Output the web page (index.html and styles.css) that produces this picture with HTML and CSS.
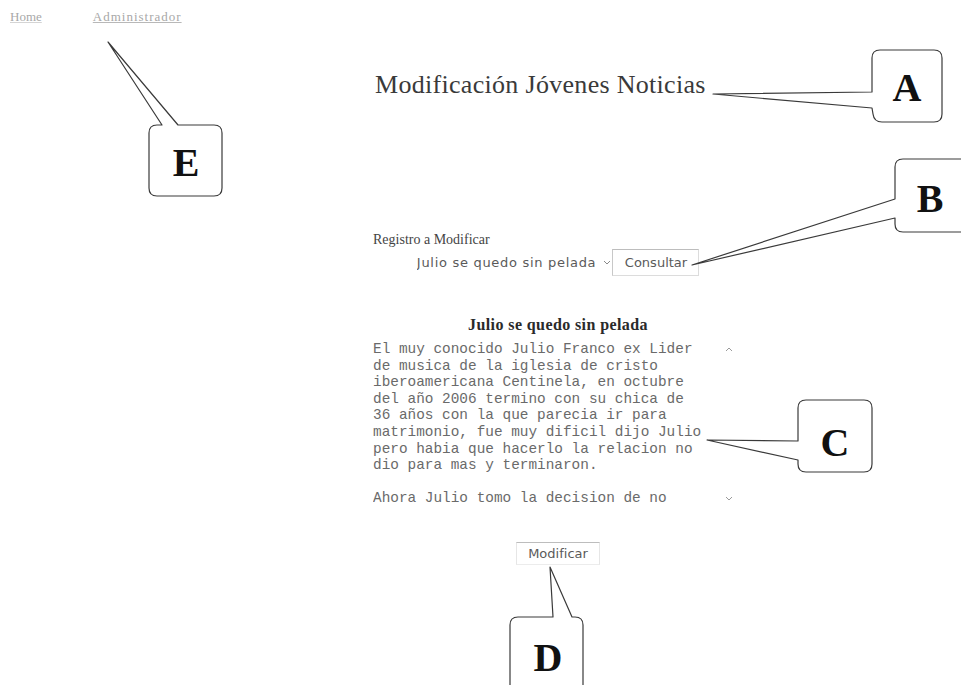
FILE: index.html
```html
<!DOCTYPE html>
<html lang="es">
<head>
<meta charset="utf-8">
<title>Modificación Jóvenes Noticias</title>
<link rel="stylesheet" href="styles.css">
</head>
<body>
<nav class="nav">
  <a class="nav-link" href="#">Home</a>
  <a class="nav-link nav-link-admin" href="#">Administrador</a>
</nav>

<main class="main">
  <h1 class="title">Modificación Jóvenes Noticias</h1>

  <form class="search">
    <label class="search-label" for="registro">Registro a Modificar</label>
    <div class="search-row">
      <div class="select-wrap">
        <select id="registro" class="select">
          <option>Julio se quedo sin pelada</option>
        </select>
        <svg class="chevron" width="8" height="5" viewBox="0 0 8 5"><path d="M1 1 L4 4 L7 1" fill="none" stroke="#8a8a8a" stroke-width="1"/></svg>
      </div>
      <button type="button" class="btn btn-consultar">Consultar</button>
    </div>
  </form>

  <section class="article">
    <h2 class="article-title">Julio se quedo sin pelada</h2>
    <div class="editor">
      <textarea class="editor-text" rows="10" spellcheck="false">El muy conocido Julio Franco ex Lider de musica de la iglesia de cristo iberoamericana Centinela, en octubre del año 2006 termino con su chica de 36 años con la que parecia ir para matrimonio, fue muy dificil dijo Julio pero habia que hacerlo la relacion no dio para mas y terminaron.

Ahora Julio tomo la decision de no</textarea>
      <div class="editor-scroll">
        <svg width="8" height="5" viewBox="0 0 8 5"><path d="M1 4 L4 1 L7 4" fill="none" stroke="#9a9a9a" stroke-width="1"/></svg>
        <svg width="8" height="5" viewBox="0 0 8 5"><path d="M1 1 L4 4 L7 1" fill="none" stroke="#9a9a9a" stroke-width="1"/></svg>
      </div>
    </div>
    <div class="actions">
      <button type="button" class="btn btn-modificar">Modificar</button>
    </div>
  </section>
</main>

<svg class="callouts" width="961" height="685" viewBox="0 0 961 685">
  <g fill="none" stroke="#3a3a3a" stroke-width="1.2" stroke-linejoin="round">
    <path d="M880 50 H934 Q942 50 942 58 V114 Q942 122 934 122 H882 Q874 122 873 114 L872 108 L713 94 L872 92 V58 Q872 50 880 50 Z"/>
    <path d="M985 159 H903 Q895 159 895 167 V199 L692 265 L895 218 V224 Q895 232 903 232 H985"/>
    <path d="M806 400 H864 Q872 400 872 408 V464 Q872 472 864 472 H806 Q798 472 798 464 V460 L707 440 L798 441 V408 Q798 400 806 400 Z"/>
    <path d="M510 700 V625 Q510 617 518 617 H553 L550 567 L572 617 H575 Q583 617 583 625 V700"/>
    <path d="M157 125 H162 L108 42 L178 125 H214 Q222 125 222 133 V188 Q222 196 214 196 H157 Q149 196 149 188 V133 Q149 125 157 125 Z"/>
  </g>
  <g class="callout-letters" text-anchor="middle">
    <text x="907" y="101">A</text>
    <text x="930" y="212">B</text>
    <text x="835" y="456">C</text>
    <text x="548" y="671">D</text>
    <text x="186" y="176">E</text>
  </g>
</svg>
</body>
</html>
```

FILE: styles.css
```css
html, body {
  margin: 0;
  padding: 0;
  background: #ffffff;
}

body {
  padding: 8px;
  font-family: "Liberation Serif", "Times New Roman", serif;
  color: #333333;
}

.nav {
  display: flex;
  gap: 51px;
  height: 18px;
  line-height: 18px;
  padding-left: 2px;
}

.nav-link {
  font-size: 13px;
  color: #a8a8a8;
  text-decoration: underline;
  text-decoration-color: #d4d4d4;
}

.nav-link-admin {
  text-decoration-color: #b8b8b8;
  letter-spacing: 1px;
}

.main {
  margin-left: 365px;
  width: 370px;
  display: flex;
  flex-direction: column;
}

.title {
  margin: 44px 0 0 2px;
  font-size: 26px;
  line-height: 30px;
  font-weight: normal;
  letter-spacing: 0.3px;
  color: #3a3a3a;
  white-space: nowrap;
}

.search {
  display: flex;
  flex-direction: column;
  margin: 131px 0 0 0;
}

.search-label {
  font-size: 14px;
  line-height: 18px;
  color: #444444;
}

.search-row {
  display: flex;
  align-items: center;
  justify-content: center;
  gap: 1px;
  height: 27px;
}

.select-wrap {
  display: flex;
  align-items: center;
  gap: 6px;
}

.select {
  appearance: none;
  -webkit-appearance: none;
  border: none;
  background: transparent;
  font-family: "DejaVu Sans", sans-serif;
  font-size: 13px;
  letter-spacing: 0.7px;
  color: #5a5a5a;
  padding: 0;
  margin: 0;
}

.chevron {
  display: block;
}

.btn {
  font-family: "DejaVu Sans", sans-serif;
  font-size: 13px;
  color: #5a5a5a;
  background: #ffffff;
  border: 1px solid #dcdcdc;
  border-top-color: #bdbdbd;
  border-left-color: #c8c8c8;
  margin: 0;
  cursor: pointer;
}

.btn-consultar {
  height: 27px;
  padding: 0 11px 0 12px;
}

.article {
  display: flex;
  flex-direction: column;
  margin-top: 40px;
}

.article-title {
  margin: 0;
  font-size: 16px;
  line-height: 18px;
  letter-spacing: 0.4px;
  font-weight: bold;
  text-align: center;
  color: #2a2a2a;
}

.editor {
  display: flex;
  margin-top: 7px;
}

.editor-text {
  width: 332px;
  height: 166px;
  padding: 0;
  margin: 0;
  border: none;
  outline: none;
  resize: none;
  overflow: hidden;
  font-family: "Liberation Mono", "Courier New", monospace;
  font-size: 14.4px;
  line-height: 16.6px;
  color: #6a6a6a;
  background: transparent;
}

.editor-scroll {
  display: flex;
  flex-direction: column;
  justify-content: space-between;
  padding: 6px 0 6px 20px;
}

.editor-scroll svg {
  display: block;
}

.actions {
  display: flex;
  justify-content: center;
  margin-top: 35px;
}

.btn-modificar {
  height: 23px;
  padding: 0 11px;
  border-left-color: #e6e6e6;
  border-right-color: #e6e6e6;
  border-bottom-color: #ececec;
}

.callouts {
  position: absolute;
  left: 0;
  top: 0;
  pointer-events: none;
}

.callout-letters {
  font-family: "Liberation Serif", "Times New Roman", serif;
  font-weight: bold;
  font-size: 40px;
  fill: #111111;
}
```
